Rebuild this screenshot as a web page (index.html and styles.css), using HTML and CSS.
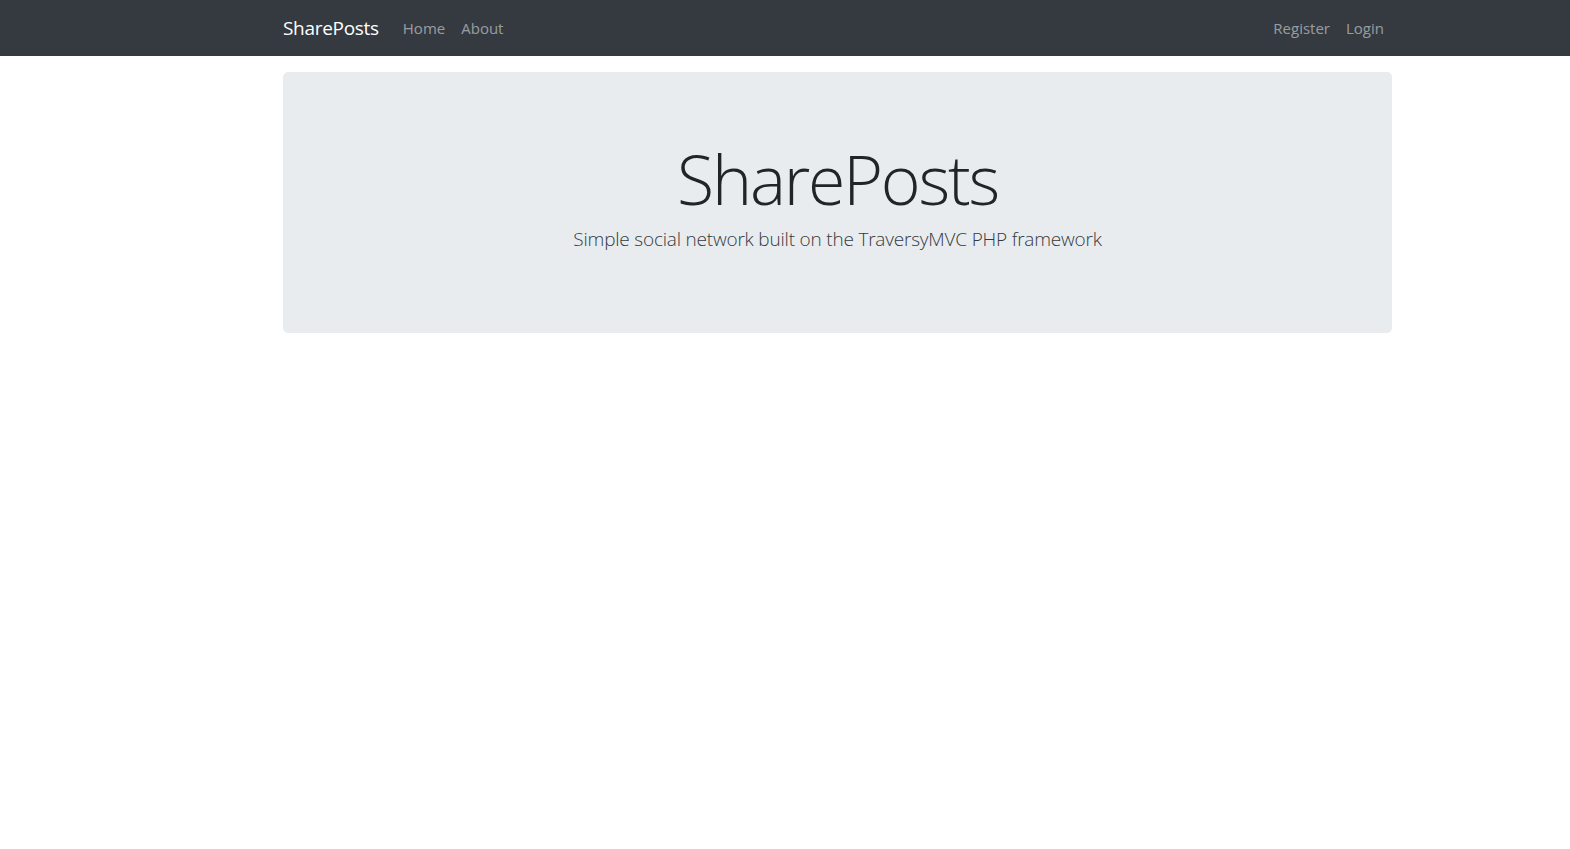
FILE: index.html
```
<!DOCTYPE html>
<html lang="en">
<head>
<meta charset="utf-8">
<title>SharePosts</title>
<link rel="stylesheet" href="styles.css">
</head>
<body>
<nav class="navbar">
  <div class="container nav-inner">
    <a class="brand" href="#">SharePosts</a>
    <ul class="nav-list">
      <li><a class="nav-link" href="#">Home</a></li>
      <li><a class="nav-link" href="#">About</a></li>
    </ul>
    <ul class="nav-list nav-right">
      <li><a class="nav-link" href="#">Register</a></li>
      <li><a class="nav-link" href="#">Login</a></li>
    </ul>
  </div>
</nav>
<main class="container">
  <div class="jumbotron">
    <h1 class="display">SharePosts</h1>
    <p class="lead">Simple social network built on the TraversyMVC PHP framework</p>
  </div>
</main>
</body>
</html>
```
FILE: styles.css
```
* { box-sizing: border-box; }
html, body { margin: 0; padding: 0; }
body {
  font-family: "Open Sans", "Noto Sans", "Liberation Sans", sans-serif;
  font-size: 16px;
  line-height: 1.5;
  color: #212529;
  background: #fff;
}
.container {
  width: 1109px;
  margin-left: 283px;
}
.navbar {
  background: #343a40;
  height: 56px;
}
.nav-inner {
  display: flex;
  align-items: center;
  height: 56px;
}
.brand {
  color: #fff;
  text-decoration: none;
  font-size: 19px;
  margin-right: 16px;
  letter-spacing: -0.3px;
}
.nav-list {
  list-style: none;
  margin: 0;
  padding: 0;
  display: flex;
}
.nav-right { margin-left: auto; }
.nav-link {
  display: block;
  padding: 8px 8px;
  color: rgba(255,255,255,0.5);
  text-decoration: none;
  font-size: 15px;
}
.jumbotron {
  margin-top: 16px;
  background: #e9ecef;
  border-radius: 5px;
  height: 261px;
  padding-top: 66px;
  text-align: center;
}
.display {
  margin: 0;
  font-size: 68px;
  font-weight: 300;
  line-height: 1.2;
  letter-spacing: -2.2px;
}
.lead {
  margin: 5px 0 0;
  font-size: 19px;
  font-weight: 300;
  letter-spacing: -0.2px;
  color: #343a40;
}
```
